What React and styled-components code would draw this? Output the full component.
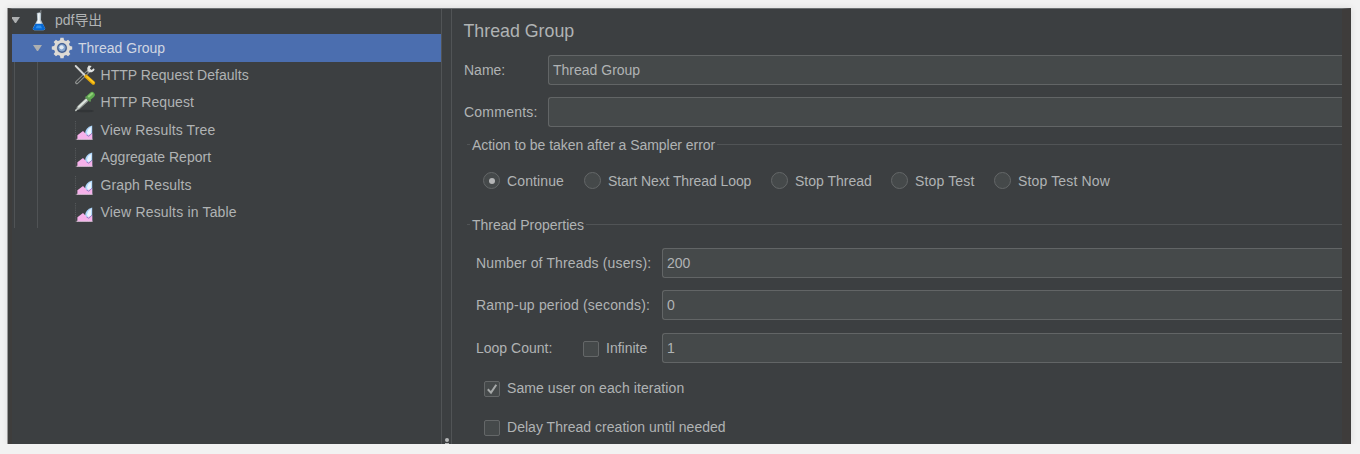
import React from 'react';
import styled, {createGlobalStyle} from 'styled-components';

const results = [
  {label: 'View Results Tree', spacing: .14},
  {label: 'Aggregate Report', spacing: 0},
  {label: 'Graph Results', spacing: .12},
  {label: 'View Results in Table', spacing: .18},
];

const actions = [
  {label: 'Continue', width: 101, spacing: .12},
  {label: 'Start Next Thread Loop', width: 187, spacing: -.09},
  {label: 'Stop Thread', width: 120, spacing: 0},
  {label: 'Stop Test', width: 103, spacing: .15},
  {label: 'Stop Test Now', width: 120, spacing: .15},
];

const FlaskIcon = () => (
    <svg width="16" height="22" viewBox="0 0 16 22">
      <path d="M5.8 4 10.2 3 10 11 14.2 19.5Q14.2 21.2 12.5 21.2H3.3Q1.3 21 1.8 19.3L6.2 11Z" fill="#b4c2cb"/>
      <path d="M7 4.5 8.8 4 8.7 11.5 10.5 15H5L7 11Z" fill="#eef3f5"/>
      <path d="M4.4 14.8H11.8L14.2 19.6Q14 21.2 12.2 21.2H3.5Q1.5 20.9 2 19.3Z" fill="#0869d4"/>
      <path d="M6 16.5H9.8L11 19.2H4.6Z" fill="#2f91ee"/>
      <path d="M10 1.2 9.3 4" stroke="#777c7f" strokeWidth="1.3"/>
    </svg>
);

const GearIcon = () => (
    <svg width="22" height="22" viewBox="0 0 22 22">
      <g fill="#dedbd5">
        {[0, 45, 90, 135, 180, 225, 270, 315].map((angle) => (
            <path key={angle} d="M8.8 4 9.4 .8H12.6L13.2 4Z" transform={`rotate(${angle} 11 11)`}/>
        ))}
        <circle cx="11" cy="11" r="8"/>
      </g>
      <circle cx="11" cy="11" r="5.5" fill="#c6c9cc"/>
      <circle cx="11" cy="11" r="4.9" fill="#3f5c8f"/>
      <circle cx="11" cy="10.8" r="3.6" fill="#87a6cf"/>
      <circle cx="10.6" cy="10.3" r="2.1" fill="#e2ebf4"/>
    </svg>
);

const ToolsIcon = () => (
    <svg width="22" height="22" viewBox="0 0 22 22" fill="none" strokeLinecap="round">
      <path d="M2.8 18.5 14.5 7.3" stroke="#929593" strokeWidth="3.4"/>
      <path d="M3 18.3 13 8.6" stroke="#3c3f41" strokeWidth="1.5"/>
      <path d="M14.6 1.5Q12.7 3.5 13.5 6.5L15.5 8.3Q19.5 8.6 20.6 5.5L19.8 4.2 17.5 6 15.9 4.5 17.6 2Z" fill="#e0e2e1"/>
      <path d="M1.7 2 11 11.5" stroke="#d4d6d5" strokeWidth="1.9"/>
      <path d="M12.2 12.5 19.3 18.9" stroke="#e4a709" strokeWidth="3.7"/>
      <path d="M13 12.8 19.5 18.4" stroke="#ffcb24" strokeWidth="1.5"/>
    </svg>
);

const PipetteIcon = () => (
    <svg width="22" height="22" viewBox="0 0 22 22" fill="none" strokeLinecap="round">
      <ellipse cx="11" cy="20" rx="9" ry="1.3" fill="#323537"/>
      <path d="M4.5 16.7 12.8 9" stroke="#929994" strokeWidth="3.8"/>
      <path d="M1.8 19.4 4.5 16.7" stroke="#b9bfbb" strokeWidth="1.6"/>
      <path d="M5 15.8 12.5 8.7" stroke="#dfe5e0" strokeWidth="2"/>
      <path d="M15 6.5 18 3.8" stroke="#5fac50" strokeWidth="5.6"/>
      <path d="M12.2 6.2 16 9.8" stroke="#619a57" strokeWidth="2"/>
      <path d="M14.8 5.4 18 2.7" stroke="#92cd79" strokeWidth="2"/>
    </svg>
);

const ChartIcon = () => (
    <svg width="22" height="22" viewBox="0 0 22 22">
      <path d="M1.5 2V20.5H19" stroke="#55585a" strokeWidth="1" strokeDasharray="1.2 1" fill="none"/>
      <path d="M11 15Q11 8.5 18.2 6.4V20H13Z" fill="#add6fb"/>
      <path d="M13 13.8Q13.6 9.8 17.3 8L17 14.5 14.5 17Z" fill="#e9f4ff"/>
      <path d="M3.4 20V16.2L9 12 13.2 16.2 18.2 14.3V20Z" fill="#f6b1ea"/>
      <path d="M12.5 16 14.8 17.3 18 14.2" stroke="#8c84c8" strokeWidth="1" fill="none"/>
      <path d="M2.5 20.3H18.5" stroke="#e5c5e0" strokeWidth="1"/>
    </svg>
);

const App = () => {
  return (
      <Window>
        <GlobalStyle/>
        <Tree>
          <TreeRow $first>
            <Arrow $indent={-1}/>
            <Icon $indent={11} $width={16}><FlaskIcon/></Icon>
            <Label $indent={8}>pdf<Chinese>导出</Chinese></Label>
          </TreeRow>
          <TreeRow $selected>
            <Arrow $indent={21}/>
            <Icon $indent={9}><GearIcon/></Icon>
            <Label $indent={5}>Thread Group</Label>
          </TreeRow>
          <Children>
            <TreeRow>
              <Icon $indent={62}><ToolsIcon/></Icon>
              <Label $indent={4.5} $spacing={.03}>HTTP Request Defaults</Label>
            </TreeRow>
            <TreeRow>
              <Icon $indent={62}><PipetteIcon/></Icon>
              <Label $indent={4.5} $spacing={.1}>HTTP Request</Label>
            </TreeRow>
            {results.map((item) => (
                <TreeRow key={item.label}>
                  <Icon $indent={62}><ChartIcon/></Icon>
                  <Label $indent={4.5} $spacing={item.spacing}>{item.label}</Label>
                </TreeRow>
            ))}
          </Children>
        </Tree>

        <Splitter>
          <Dot/>
          <Dot/>
        </Splitter>

        <Panel>
          <Title>Thread Group</Title>
          <FormRow>
            <FieldLabel $width={84}>Name:</FieldLabel>
            <Field>Thread Group</Field>
          </FormRow>
          <FormRow>
            <FieldLabel $width={84} $spacing={.23}>Comments:</FieldLabel>
            <Field/>
          </FormRow>

          <Legend $top={-2.5} $spacing={-.05}>Action to be taken after a Sampler error</Legend>
          <Actions>
            {actions.map((action, index) => (
                <Option key={action.label} $width={action.width}>
                  <Radio>{index === 0 && <RadioDot/>}</Radio>
                  <OptionText $spacing={action.spacing}>{action.label}</OptionText>
                </Option>
            ))}
          </Actions>

          <Legend $top={8}>Thread Properties</Legend>
          <Properties>
            <FormRow>
              <FieldLabel $width={186} $spacing={.14}>Number of Threads (users):</FieldLabel>
              <Field>200</Field>
            </FormRow>
            <FormRow>
              <FieldLabel $width={186} $spacing={.18}>Ramp-up period (seconds):</FieldLabel>
              <Field>0</Field>
            </FormRow>
            <FormRow>
              <FieldLabel $width={107}>Loop Count:</FieldLabel>
              <Option $width={79} $drop={2}>
                <Checkbox/>
                <OptionText $lift={2}>Infinite</OptionText>
              </Option>
              <Field>1</Field>
            </FormRow>
          </Properties>
          <Checks>
            <Option>
              <Checkbox>
                <svg width="14" height="14" viewBox="0 0 14 14" fill="none">
                  <path d="M2.8 7.2 6 10.6 11.3 2.7" stroke="#a6a9a9" strokeWidth="2"/>
                </svg>
              </Checkbox>
              <OptionText $lift={2} $spacing={.08}>Same user on each iteration</OptionText>
            </Option>
            <Option>
              <Checkbox/>
              <OptionText $lift={2} $spacing={.03}>Delay Thread creation until needed</OptionText>
            </Option>
          </Checks>
        </Panel>
      </Window>
  );
};

const GlobalStyle = createGlobalStyle`
  * {
    box-sizing: border-box;
  }

  body {
    margin: 0;
    background: #f2f2f2;
  }

  svg {
    display: block;
  }
`;

const Window = styled.div`
  display: flex;
  width: 1343px;
  height: 436px;
  margin: 8px 0 0 8px;
  overflow: hidden;
  background: #3c3f41;
  border-top: 1px solid #6c7072;
  border-left: 4px solid #3e3d3c;
  border-right: 9px solid #3e3c3b;
  box-shadow: -1px 0 0 #999, 0 0 7px rgba(0, 0, 0, .1);
  color: #b0b3b4;
  font-family: "Liberation Sans", Arial, "Noto Sans CJK SC", sans-serif;
  font-size: 14px;
  line-height: 16px;
  white-space: nowrap;
`;

const Tree = styled.div`
  flex: 0 0 429px;
`;

const TreeRow = styled.div`
  display: flex;
  align-items: center;
  height: ${(props) => (props.$first ? 25 : 27.5)}px;
  padding-bottom: ${(props) => (props.$first ? 4 : props.$selected ? 0 : 1)}px;
  background: ${(props) => (props.$selected ? '#4b6eaf' : 'transparent')};
  color: ${(props) => (props.$selected ? '#d0d6e2' : 'inherit')};
`;

const Arrow = styled.span`
  width: 9px;
  margin-left: ${(props) => props.$indent}px;
  border: 4.5px solid transparent;
  border-top: 6px solid #adafb0;
  border-bottom: 0;
`;

const Icon = styled.span`
  flex: none;
  width: ${(props) => props.$width || 22}px;
  margin-left: ${(props) => props.$indent}px;
`;

const Label = styled.span`
  margin-left: ${(props) => props.$indent}px;
  letter-spacing: ${(props) => props.$spacing || 0}px;
`;

const Chinese = styled.span`
  font-family: "Noto Sans CJK SC", sans-serif;
  letter-spacing: -.3px;
`;

const Children = styled.div`
  height: 166px;
  background: linear-gradient(#505355, #505355) 2px 0 / 1px 100% no-repeat,
    linear-gradient(#505355, #505355) 25px 0 / 1px 100% no-repeat;
`;

const Splitter = styled.div`
  display: flex;
  flex: 0 0 11px;
  flex-direction: column;
  align-items: center;
  justify-content: flex-end;
  gap: 1px;
  border-left: 1px solid #515456;
  border-right: 1px solid #515456;
`;

const Dot = styled.span`
  width: 4px;
  height: 4px;
  border-radius: 50%;
  background: #b5b7b8;

  &:last-child {
    height: 1px;
    border-radius: 0;
  }
`;

const Panel = styled.div`
  flex: 1;
  min-width: 0;
  padding-top: 11px;
`;

const Title = styled.div`
  height: 34.6px;
  padding-left: 11.5px;
  font-size: 17.8px;
  line-height: 22px;
`;

const FormRow = styled.div`
  display: flex;
  align-items: center;
  height: 30px;
  margin-bottom: 12.4px;
  padding-left: 12px;
`;

const FieldLabel = styled.div`
  flex: 0 0 ${(props) => props.$width}px;
  letter-spacing: ${(props) => props.$spacing || 0}px;
`;

const Field = styled.div`
  flex: 1;
  height: 30px;
  padding: 6px 4px;
  background: #45494a;
  border: 1px solid #626566;
  border-right: 0;
  border-radius: 3px 0 0 3px;
`;

const Legend = styled.div`
  display: flex;
  align-items: center;
  gap: 2px;
  height: 16px;
  margin-top: ${(props) => props.$top}px;
  padding-left: 15px;
  letter-spacing: ${(props) => props.$spacing || 0}px;

  &:before,
  &:after {
    content: '';
    width: 3px;
    height: 1px;
    background: #515456;
  }

  &:after {
    flex: 1;
  }
`;

const Actions = styled.div`
  display: flex;
  height: 56px;
  padding: 19.6px 0 0 31px;
`;

const Option = styled.div`
  display: flex;
  flex: none;
  align-items: center;
  gap: 7px;
  width: ${(props) => (props.$width ? props.$width + 'px' : 'auto')};
  height: 17px;
  margin-top: ${(props) => props.$drop || 0}px;
`;

const OptionText = styled.span`
  padding-bottom: ${(props) => props.$lift || 0}px;
  letter-spacing: ${(props) => props.$spacing || 0}px;
`;

const Radio = styled.span`
  display: flex;
  align-items: center;
  justify-content: center;
  flex: none;
  width: 17px;
  height: 17px;
  border: 1px solid #646768;
  border-radius: 50%;
  background: #45494a;
`;

const RadioDot = styled.span`
  width: 6px;
  height: 6px;
  border-radius: 50%;
  background: #b4b5b6;
`;

const Properties = styled.div`
  padding: 15px 0 0 12px;
`;

const Checkbox = styled.span`
  flex: none;
  width: 16px;
  height: 16px;
  background: #45494a;
  border: 1px solid #646768;
  border-radius: 2px;
`;

const Checks = styled.div`
  display: flex;
  flex-direction: column;
  gap: 22px;
  padding: 5.4px 0 0 32px;
`;

export default App;
